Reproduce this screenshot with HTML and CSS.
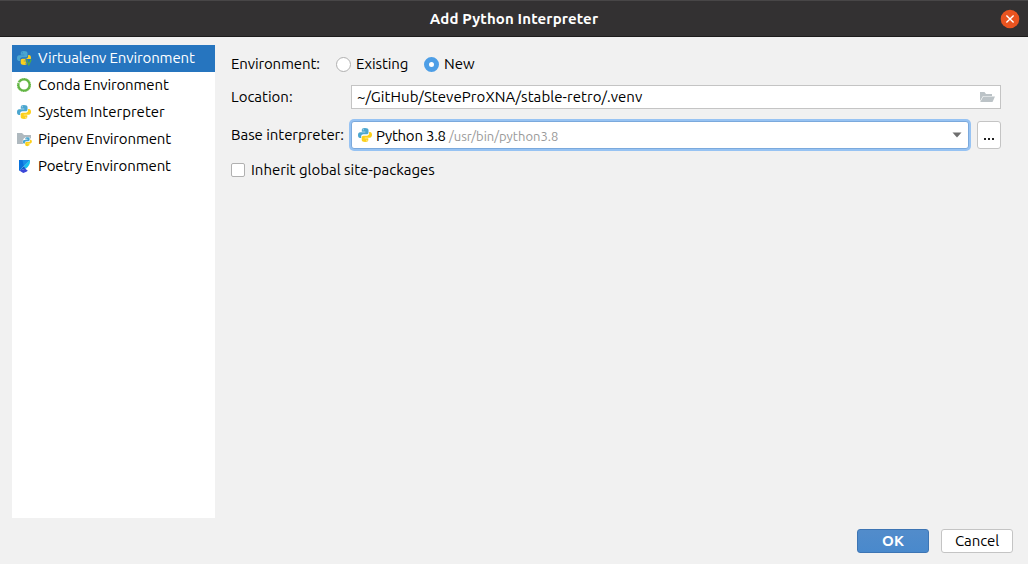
FILE: index.html
```html
<!DOCTYPE html>
<html lang="en">
<head>
<meta charset="utf-8">
<title>Add Python Interpreter</title>
<link rel="stylesheet" href="styles.css">
</head>
<body>
<svg class="defs" aria-hidden="true">
  <symbol id="python" viewBox="0 0 16 16">
    <path fill="#4ba6cf" d="M7.900 1C5.600 1 4.800 1.900 4.800 3v1.700h3.500v.6H3.100C1.800 5.300 1 6.500 1 8.200s.8 2.800 2 2.800h1.200V9.300c0-1.200 1-2.100 2.200-2.100h3.400c1 0 1.700-.8 1.700-1.800V3c0-1.200-1.300-2-3.600-2zM6.200 2.200a.5.5 0 1 1 0 1 .5.5 0 0 1 0-1z"/>
    <path fill="#fcd01b" d="M8.100 15c2.300 0 3.200-.9 3.200-2v-1.700H7.700v-.6h5.100c1.400 0 2.200-1.200 2.200-2.900S14.200 5 13 5h-.9v1.500c0 1.200-1 2.200-2.200 2.200H6.400c-1 0-1.700.8-1.700 1.800V13c0 1.200 1.200 2 3.400 2zm1.800-1.200a.5.5 0 1 1 0-1 .5.5 0 0 1 0 1z"/>
  </symbol>
</svg>
<header class="titlebar">
  <h1 class="title">Add Python Interpreter</h1>
  <svg class="close" viewBox="0 0 20 20"><circle cx="10" cy="10" r="9.300" fill="#e95420"/><path d="M6.400 6.400l7.200 7.200M13.600 6.400l-7.200 7.200" stroke="#fff" stroke-width="1.400"/></svg>
</header>
<main class="content">
  <nav class="sidebar">
    <div class="item selected">
      <svg class="icon" viewBox="0 0 16 16"><use href="#python"/><path d="M9.300 9H16v7h-4.800z" fill="#2675bf"/><path d="M10.500 9.500l2.300 5.300 2.400-5.300" fill="none" stroke="#4faa45" stroke-width="1.300"/></svg>
      <span class="t-virtualenv">Virtualenv Environment</span>
    </div>
    <div class="item">
      <svg class="icon" viewBox="0 0 16 16"><circle cx="8" cy="8" r="5.800" fill="none" stroke="#62b543" stroke-width="2.600"/><circle cx="8" cy="8" r="6.800" fill="none" stroke="#fff" stroke-width=".8" stroke-dasharray=".5 1.900"/><path d="M1 5.200l4.500 1.400" stroke="#fff" stroke-width=".8"/></svg>
      <span class="t-conda">Conda Environment</span>
    </div>
    <div class="item">
      <svg class="icon" viewBox="0 0 16 16"><use href="#python"/></svg>
      <span class="t-system">System Interpreter</span>
    </div>
    <div class="item">
      <svg class="icon" viewBox="0 0 16 16"><path d="M1 2h5l2 2h7v9H1z" fill="#afb9bf"/><circle cx="11.300" cy="10.700" r="4.700" fill="#fff"/><use href="#python" x="6.200" y="5.500" width="10.300" height="10.300"/></svg>
      <span class="t-pipenv">Pipenv Environment</span>
    </div>
    <div class="item">
      <svg class="icon" viewBox="0 0 16 16"><path d="M3 2h11L3 12.800z" fill="#0b72d8"/><path d="M3 2h7L3 12.800z" fill="#0872dc"/><path d="M6.500 2H14L7.800 8.300z" fill="#198fe8"/><path d="M14 2v1.500c0 2.700-1.500 5-4 7L7.800 8.300z" fill="#17c3ee"/><path d="M3 12.800l4.800-4.500 2.200 2.200z" fill="#0961cc"/><path d="M3.300 12.500l6-1.700 2.500 1.900c-1.300 1-2.700 1.700-4.600 2.300z" fill="#3b46d8"/></svg>
      <span class="t-poetry">Poetry Environment</span>
    </div>
  </nav>
  <section class="form">
    <div class="row environment">
      <span class="label t-env">Environment:</span>
      <label class="choice"><i class="radio"></i><span class="t-existing">Existing</span></label>
      <label class="choice"><i class="radio checked"></i><span class="t-new">New</span></label>
    </div>
    <div class="row location">
      <span class="label t-location">Location:</span>
      <div class="field"><span class="t-path">~/GitHub/SteveProXNA/stable-retro/.venv</span>
        <svg class="icon" viewBox="0 0 16 16"><path d="M1 12V3h4.500l1.500 2h6v2H4z" fill="#bcc3c7"/><path d="M4.300 7.500H16L13.500 13H1.200z" fill="#bcc3c7"/></svg>
      </div>
    </div>
    <div class="row interpreter">
      <span class="label t-base">Base interpreter:</span>
      <div class="combo">
        <svg class="icon" viewBox="0 0 16 16"><use href="#python"/></svg>
        <span class="name t-python">Python 3.8</span><span class="hint t-bin">/usr/bin/python3.8</span>
        <svg class="arrow" viewBox="0 0 10 6"><path d="M.5.500h9L5 5.500z" fill="#6e6e6e"/></svg>
      </div>
      <button class="more" aria-label="Browse"><i></i><i></i><i></i></button>
    </div>
    <label class="row inherit"><i class="check"></i><span class="t-inherit">Inherit global site-packages</span></label>
  </section>
</main>
<footer class="footer">
  <button class="button primary"><span class="t-ok">OK</span></button>
  <button class="button"><span class="t-cancel">Cancel</span></button>
</footer>
</body>
</html>
```
FILE: styles.css
```css
* { box-sizing: border-box; }
body {
  margin: 0;
  width: 1028px;
  height: 564px;
  display: flex;
  flex-direction: column;
  background: #f1f1f1;
  color: #000;
  font: 15px/20px "Ubuntu", "Noto Sans", sans-serif;
  white-space: nowrap;
  overflow: hidden;
}
.defs { position: absolute; width: 0; height: 0; }
svg { display: block; flex: none; }
span { display: block; }
.titlebar {
  height: 37px;
  flex: none;
  display: grid;
  grid-template-columns: 40px 1fr 40px;
  align-items: center;
  background: #333132;
  border-top: 1px solid #484647;
  border-bottom: 1px solid #1d1c1c;
}
.title { grid-column: 2; margin: 0; font-size: 15px; line-height: 20px; font-weight: 700; letter-spacing: .14px; color: #fff; text-align: center; }
.close { width: 20px; height: 20px; margin-left: 12px; }
.content { height: 481px; flex: none; display: flex; padding: 8px 27px 0 12px; gap: 16px; }
.sidebar { width: 203px; background: #fff; }
.item { height: 27px; padding: 0 4px 1px; display: flex; align-items: center; gap: 6px; }
.item.selected { background: #2675bf; color: #fff; }
.icon { width: 16px; height: 16px; }
.form { flex: 1; display: flex; flex-direction: column; }
.row { display: flex; align-items: center; }
.label { width: 120px; flex: none; }
.environment { height: 38px; }
.environment .label { width: 105px; }
.choice { display: flex; align-items: center; gap: 5px; width: 88px; }
.radio { width: 15px; height: 15px; border: 1px solid #b0b0b0; border-radius: 50%; background: #fff; }
.radio.checked { border: 5px solid #4d9ee6; }
.location { height: 24px; margin-top: 2px; }
.field { flex: 1; height: 24px; display: flex; align-items: center; justify-content: space-between; padding: 0 5px; border: 1px solid #c4c4c4; background: #fff; }
.interpreter { height: 28px; margin-top: 12px; }
.combo { flex: 1; height: 28px; margin-right: 8px; display: flex; align-items: center; padding: 0 6px 0 5px; border: 1px solid #7ba9dc; border-radius: 3px; box-shadow: 0 0 0 2px #97c3f3; background: #fff; }
.combo span { padding-top: 2px; }
.name { margin-left: 3px; width: 73px; }
.hint { color: #999; font-size: 13px; }
.arrow { width: 10px; height: 6px; margin-left: auto; }
.more { width: 24px; height: 28px; padding: 16px 0 0; display: flex; align-items: flex-start; justify-content: center; gap: 2px; border: 1px solid #c4c4c4; border-radius: 3px; background: #fff; }
.more i { width: 2px; height: 2px; background: #222; }
.inherit { height: 20px; margin-top: 11px; gap: 6px; }
.check { width: 14px; height: 14px; border: 1px solid #b0b0b0; border-radius: 2px; background: #fff; }
.footer { display: flex; justify-content: flex-end; gap: 12px; padding: 11px 15px 0; }
.button { width: 72px; height: 24px; padding: 0; display: flex; align-items: center; justify-content: center; font: inherit; color: #000; background: #fff; border: 1px solid #c4c4c4; border-radius: 3px; }
.button.primary { color: #fff; font-weight: 700; background: linear-gradient(#528ccb, #4989cc); border-color: #3d75b4; }
.t-virtualenv { letter-spacing: -.13px; }
.t-conda, .t-pipenv { letter-spacing: -.14px; }
.t-system { letter-spacing: 0; }
.t-poetry { letter-spacing: -.12px; }
.t-existing, .t-cancel { letter-spacing: -.08px; }
.t-env { letter-spacing: -.13px; }
.t-path { letter-spacing: .065px; }
.t-base { letter-spacing: -.05px; }
.t-python { letter-spacing: -.24px; }
```
